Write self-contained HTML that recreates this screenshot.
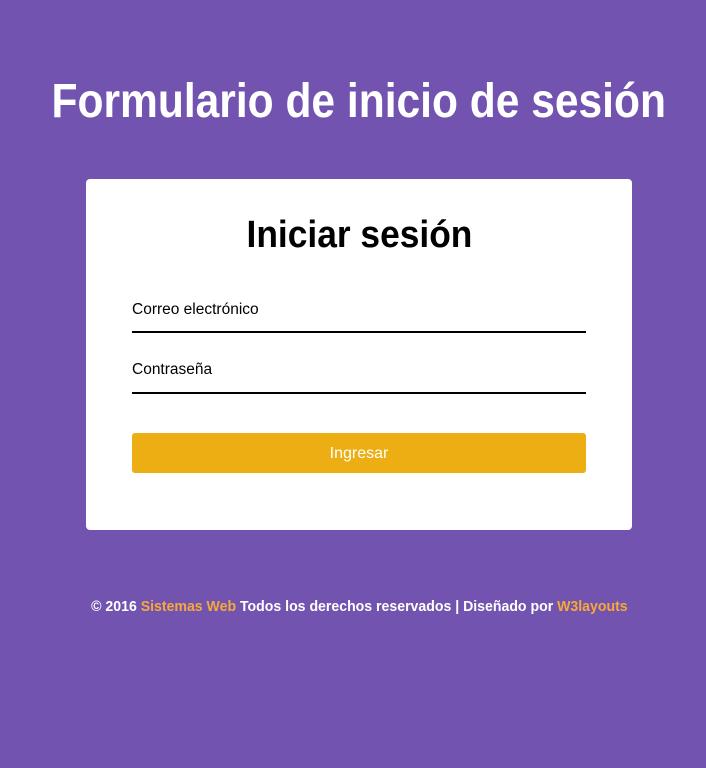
<!DOCTYPE html>
<html><head><meta charset="utf-8"><style>
html,body{margin:0;padding:0;}
body{width:706px;height:768px;background:#7254b0;position:relative;overflow:hidden;font-family:"Liberation Sans",sans-serif;}
.c{position:absolute;left:0;width:706px;text-align:center;white-space:nowrap;}
.s{display:inline-block;transform-origin:center;}
.card{position:absolute;left:86px;top:179px;width:546px;height:351px;background:#fff;border-radius:4px;}
.lab{position:absolute;left:132px;font-size:15.5px;color:#000;display:inline-block;transform:scaleX(1.0);transform-origin:left;}
.line{position:absolute;left:132px;width:454px;height:2px;background:#000;}
.btn{position:absolute;left:132px;top:433px;width:454px;height:40px;background:#ecae12;border-radius:3px;color:#fff;font-size:16px;text-align:center;line-height:42px;}
.y{color:#f5a93a;}
</style></head><body>
<div class="c" style="top:74px;font-size:48px;font-weight:bold;color:#fff;line-height:56px;left:6px"><span class="s" style="transform:scaleX(0.886)">Formulario de inicio de sesión</span></div>
<div class="card"></div>
<div class="c" style="top:212px;font-size:38px;font-weight:bold;color:#000;line-height:46px;left:6px"><span class="s" style="transform:scaleX(0.93)">Iniciar sesión</span></div>
<span class="lab" style="top:301px">Correo electrónico</span>
<div class="line" style="top:331px"></div>
<span class="lab" style="top:361px">Contraseña</span>
<div class="line" style="top:392px"></div>
<div class="btn">Ingresar</div>
<div class="c" style="top:597px;font-size:15px;font-weight:bold;color:#fff;line-height:20px;left:6px"><span class="s" style="transform:scaleX(0.94)">© 2016 <span class="y">Sistemas Web</span> Todos los derechos reservados | Diseñado por <span class="y">W3layouts</span></span></div>
</body></html>
